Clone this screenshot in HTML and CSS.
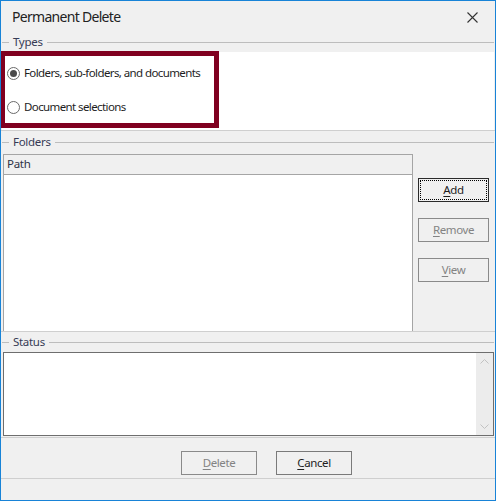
FILE: index.html
```html
<!DOCTYPE html>
<html>
<head>
<meta charset="utf-8">
<link rel="stylesheet" href="styles.css">
</head>
<body>
<div class="dialog">
  <div class="titlebar">
    <span class="title">Permanent Delete</span>
    <svg class="close" width="11" height="11" viewBox="0 0 11 11"><path d="M0.5 0.5 L10.5 10.5 M10.5 0.5 L0.5 10.5" stroke="#333" stroke-width="1.1" fill="none"/></svg>
  </div>

  <section class="group types">
    <div class="legend"><span class="ll"></span><span class="lt">Types</span><span class="lr"></span></div>
    <div class="types-body">
      <div class="radio"><span class="rb checked"></span><span class="rl">Folders, sub-folders, and documents</span></div>
      <div class="radio"><span class="rb"></span><span class="rl">Document selections</span></div>
    </div>
  </section>

  <section class="group folders">
    <div class="legend"><span class="ll"></span><span class="lt">Folders</span><span class="lr"></span></div>
    <div class="folders-body">
      <div class="listview">
        <div class="lv-head">Path</div>
        <div class="lv-body"></div>
      </div>
      <div class="side-buttons">
        <button class="btn focus"><u>A</u>dd</button>
        <button class="btn disabled"><u>R</u>emove</button>
        <button class="btn disabled"><u>V</u>iew</button>
      </div>
    </div>
  </section>

  <section class="group status">
    <div class="legend"><span class="ll"></span><span class="lt">Status</span><span class="lr"></span></div>
    <div class="status-box">
      <div class="status-text"></div>
      <div class="scrollbar">
        <span class="arrow"><svg width="9" height="5" viewBox="0 0 9 5"><path d="M0.5 4.5 L4.5 0.5 L8.5 4.5" stroke="#c2c2c2" fill="none"/></svg></span>
        <span class="arrow"><svg width="9" height="5" viewBox="0 0 9 5"><path d="M0.5 0.5 L4.5 4.5 L8.5 0.5" stroke="#c2c2c2" fill="none"/></svg></span>
      </div>
    </div>
  </section>

  <div class="footer">
    <div class="footer-buttons">
      <button class="btn disabled wide"><u>D</u>elete</button>
      <button class="btn wide"><u>C</u>ancel</button>
    </div>
  </div>

  <div class="highlight"></div>
</div>
</body>
</html>
```

FILE: styles.css
```css
* { box-sizing: border-box; }
html, body { margin: 0; padding: 0; background: #f0f0f0; }
body { font-family: "Noto Sans", "Open Sans", sans-serif; font-size: 11.5px; color: #1e1e1e; }

.dialog {
  position: relative;
  width: 496px;
  height: 501px;
  border: 1px solid #1883d7;
  background: #f0f0f0;
  display: flex;
  flex-direction: column;
  overflow: hidden;
}

.titlebar {
  height: 34px;
  flex: none;
  display: flex;
  align-items: center;
  justify-content: space-between;
  padding: 0 17px 3px 11px;
}
.title { font-size: 14px; color: #222; letter-spacing: -0.7px; }
.close { display: block; margin-top: 1px; }

.legend {
  height: 15px;
  display: flex;
  align-items: center;
  padding-left: 1px;
}
.ll { width: 7px; height: 1px; background: #bdbdbd; }
.lt { margin: 0 4px; color: #363b55; line-height: 13px; padding-bottom: 2px; letter-spacing: -0.3px; }
.lr { flex: 1; height: 1px; background: #bdbdbd; margin-right: 1px; }

.group { flex: none; }

.types { border-bottom: 1px solid #cfcfcf; }
.types-body {
  margin: 2px 1px 0 1px;
  height: 78px;
  background: #fff;
  padding: 11px 0 0 5px;
  display: flex;
  flex-direction: column;
  gap: 13px;
}
.radio {
  height: 21px;
  display: flex;
  align-items: center;
  gap: 4px;
  color: #1e1e1e;
  letter-spacing: -0.6px;
}
.rl { padding-bottom: 2px; }
.rb {
  width: 13px;
  height: 13px;
  border-radius: 50%;
  border: 1px solid #6a6a6a;
  background: #fff;
  display: flex;
  align-items: center;
  justify-content: center;
}
.rb.checked::after {
  content: "";
  width: 7px;
  height: 7px;
  border-radius: 50%;
  background: #4a4a4a;
}

.folders { margin-top: 4px; border-bottom: 1px solid #cfcfcf; }
.folders-body {
  display: flex;
  padding: 4px 0 0 2px;
  gap: 5px;
}
.listview {
  width: 410px;
  height: 177px;
  border: 1px solid #a5a5a5;
  border-bottom: none;
  display: flex;
  flex-direction: column;
}
.lv-head {
  height: 20px;
  background: #f0f0f0;
  border-bottom: 1px solid #a5a5a5;
  padding-left: 3px;
  line-height: 17px;
  color: #2e3347;
  letter-spacing: -0.3px;
}
.lv-body { flex: 1; background: #fff; }

.side-buttons {
  display: flex;
  flex-direction: column;
  gap: 16px;
  padding-top: 24px;
}

.btn {
  width: 71px;
  height: 24px;
  border: 1px solid #7a7a7a;
  background: #f0f0f0;
  font-family: inherit;
  font-size: 11.5px;
  color: #1e1e1e;
  padding: 0 0 2px 0;
  letter-spacing: -0.4px;
}
.btn u { text-decoration-thickness: 1px; text-underline-offset: 2px; }
.btn.disabled { color: #838383; border-color: #8a8a8a; }
.btn.focus { border-color: #2a2a2a; outline: 1px dotted #000; outline-offset: -3px; }
.btn.wide { width: 76px; }

.status { margin-top: 3px; border-bottom: 1px solid #cfcfcf; padding-bottom: 1px; }
.status-box {
  margin: 2px 1px 0 2px;
  height: 84px;
  border: 1px solid #6e6e6e;
  background: #fff;
  display: flex;
}
.status-text { flex: 1; }
.scrollbar {
  width: 17px;
  background: #ececec;
  display: flex;
  flex-direction: column;
  justify-content: space-between;
}
.arrow {
  height: 17px;
  display: flex;
  align-items: center;
  justify-content: center;
}
.arrow svg { display: block; }

.footer { flex: none; }
.footer-buttons {
  display: flex;
  gap: 19px;
  padding: 13px 0 0 180px;
  height: 41px;
  border-bottom: 1px solid #cfcfcf;
}

.highlight {
  position: absolute;
  left: -1px;
  top: 50px;
  width: 219px;
  height: 77px;
  border: 5px solid #800020;
}
```
